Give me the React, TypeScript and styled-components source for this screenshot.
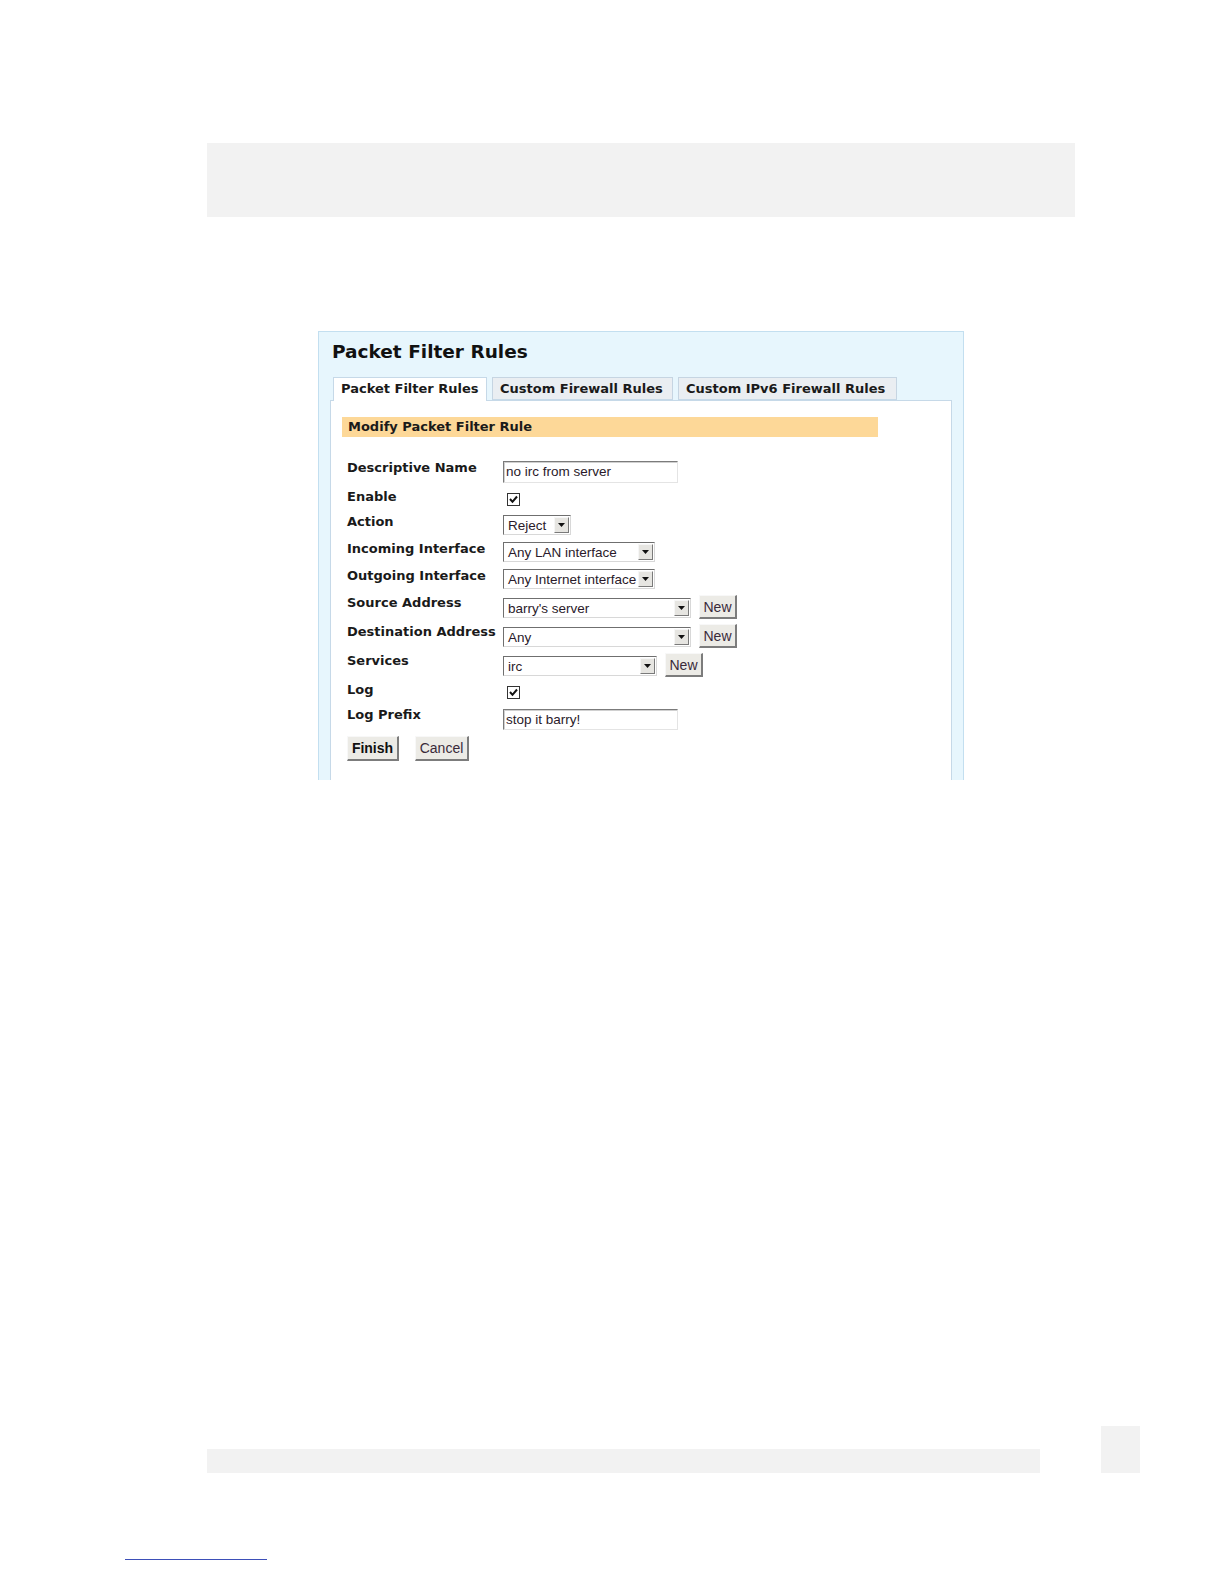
import React from "react";
import styled, { createGlobalStyle } from "styled-components";

const Global = createGlobalStyle`
  html, body { margin: 0; padding: 0; background: #ffffff; overflow: hidden; }
  body { font-family: "DejaVu Sans", Verdana, sans-serif; color: #111; }
`;

const Page = styled.div`
  padding-top: 143px;
  display: flex;
  flex-direction: column;
`;

const TopBox = styled.div`
  margin-left: 207px;
  width: 868px;
  height: 74px;
  background: #f2f2f2;
`;

const Panel = styled.div`
  margin-top: 114px;
  margin-left: 318px;
  width: 646px;
  height: 449px;
  box-sizing: border-box;
  background: #e7f6fd;
  border: 1px solid #c3dff0;
  border-bottom: none;
  padding: 0 11px;
  display: flex;
  flex-direction: column;
`;

const Title = styled.h1`
  margin: 0;
  padding: 9px 0 0 2px;
  height: 36px;
  box-sizing: border-box;
  font-family: "DejaVu Sans", Verdana, sans-serif;
  font-weight: bold;
  font-size: 18.5px;
  line-height: 22px;
  color: #111;
`;

const Tabs = styled.div`
  display: flex;
  gap: 5px;
  padding-left: 3px;
  margin-top: 9px;
  position: relative;
  z-index: 1;
  margin-bottom: -1px;
`;

const Tab = styled.div<{ $active?: boolean; $w: number }>`
  width: ${(p) => p.$w}px;
  height: ${(p) => (p.$active ? 24 : 23)}px;
  box-sizing: border-box;
  border: 1px solid ${(p) => (p.$active ? "#c6d9e8" : "#c6d5e2")};
  border-bottom: ${(p) => (p.$active ? "none" : "1px solid #c6d9e8")};
  background: ${(p) => (p.$active ? "#ffffff" : "#eaeef2")};
  padding-left: 7px;
  font-family: "DejaVu Sans", Verdana, sans-serif;
  font-weight: bold;
  font-size: 13px;
  line-height: 22px;
  color: #1a1a1a;
  white-space: nowrap;
`;

const Content = styled.div`
  flex: 1;
  background: #ffffff;
  border: 1px solid #c6d9e8;
  border-bottom: none;
  padding: 16px 11px 0 11px;
`;

const SectionHead = styled.div`
  width: 536px;
  height: 20px;
  box-sizing: border-box;
  background: #fdd898;
  padding-left: 6px;
  font-family: "DejaVu Sans", Verdana, sans-serif;
  font-weight: bold;
  font-size: 13px;
  line-height: 20px;
  color: #1a1a1a;
`;

const Form = styled.div`
  margin-top: 23px;
  margin-left: 5px;
  display: flex;
  flex-direction: column;
`;

const Row = styled.div<{ $h: number }>`
  display: flex;
  align-items: flex-start;
  height: ${(p) => p.$h}px;
`;

const Label = styled.div`
  width: 156px;
  flex: none;
  font-family: "DejaVu Sans", Verdana, sans-serif;
  font-weight: bold;
  font-size: 13px;
  line-height: 16px;
  color: #1a1a1a;
  white-space: nowrap;
`;

const Field = styled.div<{ $top: number }>`
  display: flex;
  align-items: flex-start;
  gap: 8px;
  margin-top: ${(p) => p.$top}px;
`;

const TextBox = styled.div<{ $h?: number }>`
  width: 175px;
  height: ${(p) => p.$h ?? 22}px;
  box-sizing: border-box;
  border-top: 1px solid #7b7b7b;
  border-left: 1px solid #7b7b7b;
  border-right: 1px solid #e4e4e4;
  border-bottom: 1px solid #e4e4e4;
  box-shadow: inset 1px 1px 0 #d0d0d0;
  padding-left: 2px;
  font-family: "Liberation Sans", Arial, sans-serif;
  font-size: 13.5px;
  line-height: 20px;
  color: #2a1a2a;
  white-space: nowrap;
`;

const Check = styled.div`
  width: 13px;
  height: 13px;
  box-sizing: border-box;
  margin-left: 4px;
  border: 1px solid #333;
  background: #fff;
  display: flex;
  align-items: center;
  justify-content: center;
`;

const SelectBox = styled.div<{ $w: number; $h?: number }>`
  width: ${(p) => p.$w}px;
  height: ${(p) => p.$h ?? 20}px;
  box-sizing: border-box;
  border-top: 1px solid #6f6f6f;
  border-left: 1px solid #6f6f6f;
  border-right: 1px solid #d8d8d8;
  border-bottom: 1px solid #d8d8d8;
  background: #fff;
  display: flex;
  align-items: stretch;
  padding: 1px;
`;

const SelectText = styled.div`
  flex: 1;
  padding-left: 3px;
  font-family: "Liberation Sans", Arial, sans-serif;
  font-size: 13.5px;
  line-height: 17px;
  color: #2a1a2a;
  white-space: nowrap;
  overflow: hidden;
`;

const Arrow = styled.div`
  width: 15px;
  flex: none;
  box-sizing: border-box;
  background: #e6e5e1;
  border-top: 1px solid #f6f6f6;
  border-left: 1px solid #f6f6f6;
  border-right: 1px solid #7a7a7a;
  border-bottom: 1px solid #7a7a7a;
  display: flex;
  align-items: center;
  justify-content: center;
`;

const Button = styled.div<{ $w: number; $h?: number; $bold?: boolean }>`
  width: ${(p) => p.$w}px;
  height: ${(p) => p.$h ?? 24}px;
  box-sizing: border-box;
  background: #ecebe6;
  border-top: 1px solid #f8f8f8;
  border-left: 1px solid #f8f8f8;
  border-right: 2px solid #7c7c7c;
  border-bottom: 2px solid #7c7c7c;
  display: flex;
  align-items: center;
  justify-content: center;
  font-family: "Liberation Sans", Arial, sans-serif;
  font-size: 14px;
  font-weight: ${(p) => (p.$bold ? "bold" : "normal")};
  color: ${(p) => (p.$bold ? "#111" : "#3a2a3a")};
`;

const ButtonRow = styled.div`
  display: flex;
  gap: 16px;
`;

const Footer = styled.div`
  margin-top: 646px;
  display: flex;
  align-items: flex-end;
`;

const FootBar = styled.div`
  margin-left: 207px;
  width: 833px;
  height: 24px;
  background: #f2f2f2;
`;

const FootBox = styled.div`
  margin-left: 61px;
  width: 39px;
  height: 47px;
  background: #f2f2f2;
`;

const LinkLine = styled.div`
  margin-top: 86px;
  margin-left: 125px;
  width: 142px;
  height: 1px;
  background: #3d4fb8;
`;

const Tick = () => (
  <svg width="9" height="9" viewBox="0 0 9 9">
    <path d="M1 4 L3.5 6.8 L8 1.5" stroke="#111" strokeWidth="2" fill="none" />
  </svg>
);

const Tri = () => (
  <svg width="7" height="4" viewBox="0 0 7 4">
    <path d="M0 0 H7 L3.5 4 Z" fill="#111" />
  </svg>
);

const Select = ({ w, text, h }: { w: number; text: string; h?: number }) => (
  <SelectBox $w={w} $h={h}>
    <SelectText>{text}</SelectText>
    <Arrow>
      <Tri />
    </Arrow>
  </SelectBox>
);

export default function App() {
  return (
    <>
      <Global />
      <Page>
        <TopBox />
        <Panel>
          <Title>Packet Filter Rules</Title>
          <Tabs>
            <Tab $active $w={154}>Packet Filter Rules</Tab>
            <Tab $w={181}>Custom Firewall Rules</Tab>
            <Tab $w={219}>Custom IPv6 Firewall Rules</Tab>
          </Tabs>
          <Content>
            <SectionHead>Modify Packet Filter Rule</SectionHead>
            <Form>
              <Row $h={29}>
                <Label>Descriptive Name</Label>
                <Field $top={1}>
                  <TextBox>no irc from server</TextBox>
                </Field>
              </Row>
              <Row $h={25}>
                <Label>Enable</Label>
                <Field $top={4}>
                  <Check>
                    <Tick />
                  </Check>
                </Field>
              </Row>
              <Row $h={27}>
                <Label>Action</Label>
                <Field $top={1}>
                  <Select w={68} text="Reject" />
                </Field>
              </Row>
              <Row $h={27}>
                <Label>Incoming Interface</Label>
                <Field $top={1}>
                  <Select w={152} text="Any LAN interface" />
                </Field>
              </Row>
              <Row $h={27}>
                <Label>Outgoing Interface</Label>
                <Field $top={1}>
                  <Select w={152} text="Any Internet interface" />
                </Field>
              </Row>
              <Row $h={29}>
                <Label>Source Address</Label>
                <Field $top={0}>
                  <Field $top={3}>
                    <Select w={188} text="barry's server" />
                  </Field>
                  <Button $w={38}>New</Button>
                </Field>
              </Row>
              <Row $h={29}>
                <Label>Destination Address</Label>
                <Field $top={0}>
                  <Field $top={3}>
                    <Select w={188} text="Any" />
                  </Field>
                  <Button $w={38}>New</Button>
                </Field>
              </Row>
              <Row $h={29}>
                <Label>Services</Label>
                <Field $top={0}>
                  <Field $top={3}>
                    <Select w={154} text="irc" />
                  </Field>
                  <Button $w={38}>New</Button>
                </Field>
              </Row>
              <Row $h={25}>
                <Label>Log</Label>
                <Field $top={4}>
                  <Check>
                    <Tick />
                  </Check>
                </Field>
              </Row>
              <Row $h={29}>
                <Label>Log Prefix</Label>
                <Field $top={2}>
                  <TextBox $h={21}>stop it barry!</TextBox>
                </Field>
              </Row>
              <ButtonRow>
                <Button $w={52} $h={25} $bold>
                  Finish
                </Button>
                <Button $w={54} $h={25}>
                  Cancel
                </Button>
              </ButtonRow>
            </Form>
          </Content>
        </Panel>
        <Footer>
          <FootBar />
          <FootBox />
        </Footer>
        <LinkLine />
      </Page>
    </>
  );
}
